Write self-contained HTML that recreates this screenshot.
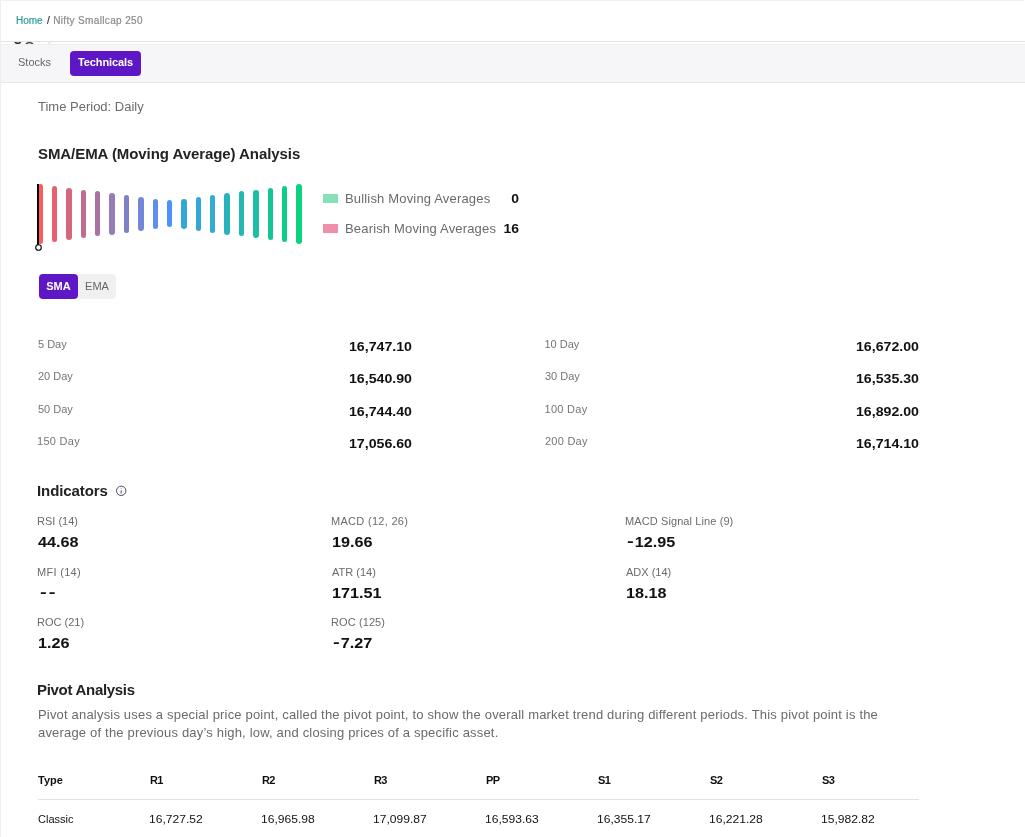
<!DOCTYPE html>
<html lang="en">
<head>
<meta charset="utf-8">
<title>Nifty Smallcap 250 - Technicals</title>
<style>
  html, body { margin: 0; padding: 0; }
  body {
    width: 1025px; height: 837px; overflow: hidden; position: relative;
    background: #fff; color: #111;
    font-family: "Liberation Sans", sans-serif;
    -webkit-font-smoothing: antialiased;
  }
  .abs { position: absolute; white-space: nowrap; line-height: 1; }
  .frame { position: absolute; left: 0; top: 0; width: 1024px; height: 837px; border-left: 1px solid #eeeeee; border-top: 1px solid #f0f0f0; pointer-events: none; box-sizing: border-box; }

  /* breadcrumb */
  .crumbs { position: absolute; left: 0; top: 0; width: 1025px; height: 41px; border-bottom: 1px solid #e3e3e3; }
  .crumbs nav { position: absolute; left: 16px; top: 14px; font-size: 10px; line-height: 13px; letter-spacing: 0.35px; -webkit-text-stroke: 0.2px; color: #8a8a8a; white-space: nowrap; }
  .crumbs a { color: #2a9d99; text-decoration: none; letter-spacing: -0.05px; margin-right: 1.6px; }
  .crumbs .sep { color: #333; padding: 0 3px; }

  /* clipped sticky strip */
  .strip { position: absolute; left: 0; top: 42px; width: 1025px; height: 2px; overflow: hidden; }
  .strip span { position: absolute; line-height: 1; color: #111; }
  .strip .s1 { left: 14px; top: -9.6px; font-size: 14px; font-weight: normal; -webkit-text-stroke: 0.4px; }
  .strip .s2 { left: 24px; top: -2.5px; font-size: 14px; color: #333; }
  .strip i { position: absolute; left: 48px; top: 0; width: 3px; height: 2px; background: #ececee; }

  /* tabs */
  .tabs { position: absolute; left: 0; top: 44px; width: 1025px; height: 37px; background: #f6f6f8; border-top: 1px solid #f0f0f2; border-bottom: 1px solid #e6e6ea; box-sizing: content-box; }
  .tab { position: absolute; top: 6px; height: 25px; line-height: 23px; font-size: 11px; white-space: nowrap; }
  .tab.stocks { left: 18px; color: #666; }
  .tab.active { left: 70px; width: 71px; text-align: center; letter-spacing: -0.1px; background: #5e17c4; color: #fff; font-weight: bold; border-radius: 4px; }

  .muted { color: #6b6b6b; }
  h2 { margin: 0; font-size: 15px; font-weight: bold; color: #232326; position: absolute; white-space: nowrap; line-height: 18px; }

  /* legend */
  .legend .sw { position: absolute; width: 15px; height: 9px; }
  .legend .lbl { font-size: 13px; color: #6b6b6b; letter-spacing: 0.17px; }
  .legend .num { font-size: 13px; font-weight: bold; color: #111; text-align: right; transform: scaleX(1.07); transform-origin: right center; }

  /* toggle */
  .toggle { position: absolute; left: 39px; top: 274px; height: 25px; }
  .toggle span { position: absolute; top: 0; height: 25px; line-height: 25px; font-size: 11px; text-align: center; }
  .toggle .on { left: 0; width: 39px; background: #5e17c4; color: #fff; font-weight: bold; border-radius: 4px; z-index: 1; }
  .toggle .off { left: 39px; width: 38px; background: #f0f0f0; color: #666; border-radius: 0 4px 4px 0; }

  /* moving average grid */
  .ma .k { font-size: 11px; color: #757575; }
  .ma .v { font-size: 13px; font-weight: bold; color: #111; text-align: right; transform: scaleX(1.09); transform-origin: right center; }

  /* indicators */
  .ind .k { font-size: 11px; color: #6b6b6b; }
  .ind .v { font-size: 15px; font-weight: bold; color: #111; transform: scaleX(1.08); transform-origin: left center; }

  .ind .v .neg { font-weight: bold; margin-left: 1px; margin-right: 2px; display: inline-block; transform: translateY(-1px) scaleX(1.25); transform-origin: left center; }

  /* pivot */
  .pivot p { position: absolute; left: 38px; top: 706px; margin: 0; width: 900px; font-size: 13px; line-height: 18px; color: #6b6b6b; letter-spacing: 0.185px; }
  table.pv { position: absolute; left: 38px; top: 761px; width: 881px; border-collapse: collapse; table-layout: fixed; font-size: 11px; }
  table.pv th { text-align: left; font-weight: bold; color: #111; height: 38px; letter-spacing: -0.6px; padding: 0; border-bottom: 1px solid #e2e2e2; }
  table.pv td { text-align: left; color: #111; height: 38px; padding: 0; }
  table.pv td .n { display: inline-block; margin-left: -1px; transform: scaleX(1.1); transform-origin: left center; }
  table.pv td:first-child, table.pv th:first-child { letter-spacing: 0; }
</style>
</head>
<body>
<div id="page" style="will-change:transform; position:absolute; left:0; top:0; width:1025px; height:837px;">

<header class="crumbs">
  <nav><a>Home</a><span class="sep">/</span><span>Nifty Smallcap 250</span></nav>
</header>
<div class="strip"><span class="s1">5</span><span class="s2">O</span><i></i></div>

<div class="tabs">
  <span class="tab stocks">Stocks</span>
  <span class="tab active">Technicals</span>
</div>

<main>
  <div class="abs muted" style="left:38px; top:100px; font-size:13px;">Time Period: Daily</div>

  <h2 style="left:38px; top:145px; letter-spacing:-0.07px;">SMA/EMA (Moving Average) Analysis</h2>

  <svg class="abs" style="left:30px; top:175px;" width="290" height="85" viewBox="30 175 290 85" id="bars">
      <rect x="38" y="184" width="5" height="60" rx="2.5" fill="#fc5c5c"/>
      <rect x="52" y="186" width="5" height="56" rx="2.5" fill="#e85f6e"/>
      <rect x="66" y="188" width="6" height="52" rx="3.0" fill="#d4677e"/>
      <rect x="81" y="190" width="5" height="48" rx="2.5" fill="#c06c92"/>
      <rect x="95" y="191" width="5" height="45" rx="2.5" fill="#aa72a2"/>
      <rect x="109" y="193" width="6" height="42" rx="3.0" fill="#987cb7"/>
      <rect x="124" y="195" width="5" height="38" rx="2.5" fill="#8080c8"/>
      <rect x="138" y="197" width="6" height="34" rx="3.0" fill="#7486da"/>
      <rect x="153" y="199" width="5" height="30" rx="2.5" fill="#608eeb"/>
      <rect x="167" y="200" width="5" height="27" rx="2.5" fill="#4d91ff"/>
      <rect x="181" y="199" width="6" height="30" rx="3.0" fill="#30a8d4"/>
      <rect x="196" y="197" width="5" height="34" rx="2.5" fill="#32a8d4"/>
      <rect x="210" y="195" width="5" height="38" rx="2.5" fill="#32aad2"/>
      <rect x="224" y="193" width="6" height="42" rx="3.0" fill="#28b2c0"/>
      <rect x="239" y="191" width="5" height="45" rx="2.5" fill="#24b7b4"/>
      <rect x="253" y="190" width="6" height="48" rx="3.0" fill="#1cbea5"/>
      <rect x="268" y="188" width="5" height="52" rx="2.5" fill="#14c596"/>
      <rect x="282" y="186" width="5" height="56" rx="2.5" fill="#0ccd87"/>
      <rect x="296" y="184" width="6" height="60" rx="3.0" fill="#0ad27d"/>
      <rect x="37" y="184" width="2" height="61" fill="#000"/>
      <circle cx="38.5" cy="247.5" r="2.8" fill="#fff" stroke="#000" stroke-width="1.1"/>
    </svg>

  <div class="legend">
    <span class="sw" style="left:323px; top:194px; background:#86e0b8;"></span>
    <span class="abs lbl" style="left:345px; top:192px;">Bullish Moving Averages</span>
    <span class="abs num" style="left:490px; width:29px; top:192px;">0</span>
    <span class="sw" style="left:323px; top:224px; background:#f08fab;"></span>
    <span class="abs lbl" style="left:345px; top:222px;">Bearish Moving Averages</span>
    <span class="abs num" style="left:490px; width:29px; top:222px;">16</span>
  </div>

  <div class="toggle"><span class="on">SMA</span><span class="off">EMA</span></div>

  <section class="ma">
    <span class="abs k" style="left:38px; top:339px;">5 Day</span><span class="abs v" style="left:312px; width:100px; top:340px;">16,747.10</span>
    <span class="abs k" style="left:544.5px; top:339px;">10 Day</span><span class="abs v" style="left:819px; width:100px; top:340px;">16,672.00</span>
    <span class="abs k" style="left:38px; top:371px;">20 Day</span><span class="abs v" style="left:312px; width:100px; top:372px;">16,540.90</span>
    <span class="abs k" style="left:545px; top:371px;">30 Day</span><span class="abs v" style="left:819px; width:100px; top:372px;">16,535.30</span>
    <span class="abs k" style="left:38px; top:404px;">50 Day</span><span class="abs v" style="left:312px; width:100px; top:405px;">16,744.40</span>
    <span class="abs k" style="left:544.5px; top:404px; letter-spacing:0.3px;">100 Day</span><span class="abs v" style="left:819px; width:100px; top:405px;">16,892.00</span>
    <span class="abs k" style="left:37px; top:436px; letter-spacing:0.3px;">150 Day</span><span class="abs v" style="left:312px; width:100px; top:437px;">17,056.60</span>
    <span class="abs k" style="left:545px; top:436px; letter-spacing:0.25px;">200 Day</span><span class="abs v" style="left:819px; width:100px; top:437px;">16,714.10</span>
  </section>

  <section class="ind">
    <h2 style="left:37px; top:482px; letter-spacing:-0.1px;">Indicators</h2>
    <svg class="abs" style="left:114px; top:484px;" width="14" height="14" viewBox="0 0 14 14">
      <circle cx="7.2" cy="6.8" r="4.7" fill="none" stroke="#474b66" stroke-width="1"/>
      <rect x="6.6" y="6.2" width="1.2" height="3.5" fill="#6e7190"/>
      <rect x="6.7" y="4.1" width="1" height="0.8" fill="#9a9cb2"/>
    </svg>

    <span class="abs k" style="left:37px; top:516px;">RSI (14)</span><span class="abs v" style="left:38px; top:534px;">44.68</span>
    <span class="abs k" style="left:331px; top:516px; letter-spacing:0.3px;">MACD (12, 26)</span><span class="abs v" style="left:332px; top:534px;">19.66</span>
    <span class="abs k" style="left:625px; top:516px; letter-spacing:0.1px;">MACD Signal Line (9)</span><span class="abs v" style="left:626px; top:534px;"><b class="neg">-</b>12.95</span>

    <span class="abs k" style="left:37px; top:567px; letter-spacing:0.3px;">MFI (14)</span><span class="abs v" style="left:38px; top:585px; left:38.5px;"><b class="neg">-</b><b class="neg">-</b></span>
    <span class="abs k" style="left:332px; top:567px;">ATR (14)</span><span class="abs v" style="left:332px; top:585px;">171.51</span>
    <span class="abs k" style="left:626px; top:567px;">ADX (14)</span><span class="abs v" style="left:626px; top:585px;">18.18</span>

    <span class="abs k" style="left:37px; top:617px;">ROC (21)</span><span class="abs v" style="left:38px; top:635px;">1.26</span>
    <span class="abs k" style="left:331px; top:617px; letter-spacing:0.1px;">ROC (125)</span><span class="abs v" style="left:332px; top:635px;"><b class="neg">-</b>7.27</span>
  </section>

  <section class="pivot">
    <h2 style="left:37px; top:681px; letter-spacing:-0.3px;">Pivot Analysis</h2>
    <p>Pivot analysis uses a special price point, called the pivot point, to show the overall market trend during different periods. This pivot point is the<br>average of the previous day’s high, low, and closing prices of a specific asset.</p>
    <table class="pv">
      <colgroup><col style="width:112px"><col style="width:112px"><col style="width:112px"><col style="width:112px"><col style="width:112px"><col style="width:112px"><col style="width:112px"><col></colgroup>
      <thead><tr><th>Type</th><th>R1</th><th>R2</th><th>R3</th><th>PP</th><th>S1</th><th>S2</th><th>S3</th></tr></thead>
      <tbody><tr><td>Classic</td><td><span class="n">16,727.52</span></td><td><span class="n">16,965.98</span></td><td><span class="n">17,099.87</span></td><td><span class="n">16,593.63</span></td><td><span class="n">16,355.17</span></td><td><span class="n">16,221.28</span></td><td><span class="n">15,982.82</span></td></tr></tbody>
    </table>
  </section>
</main>
<div class="frame"></div>
</div>
</body>
</html>
